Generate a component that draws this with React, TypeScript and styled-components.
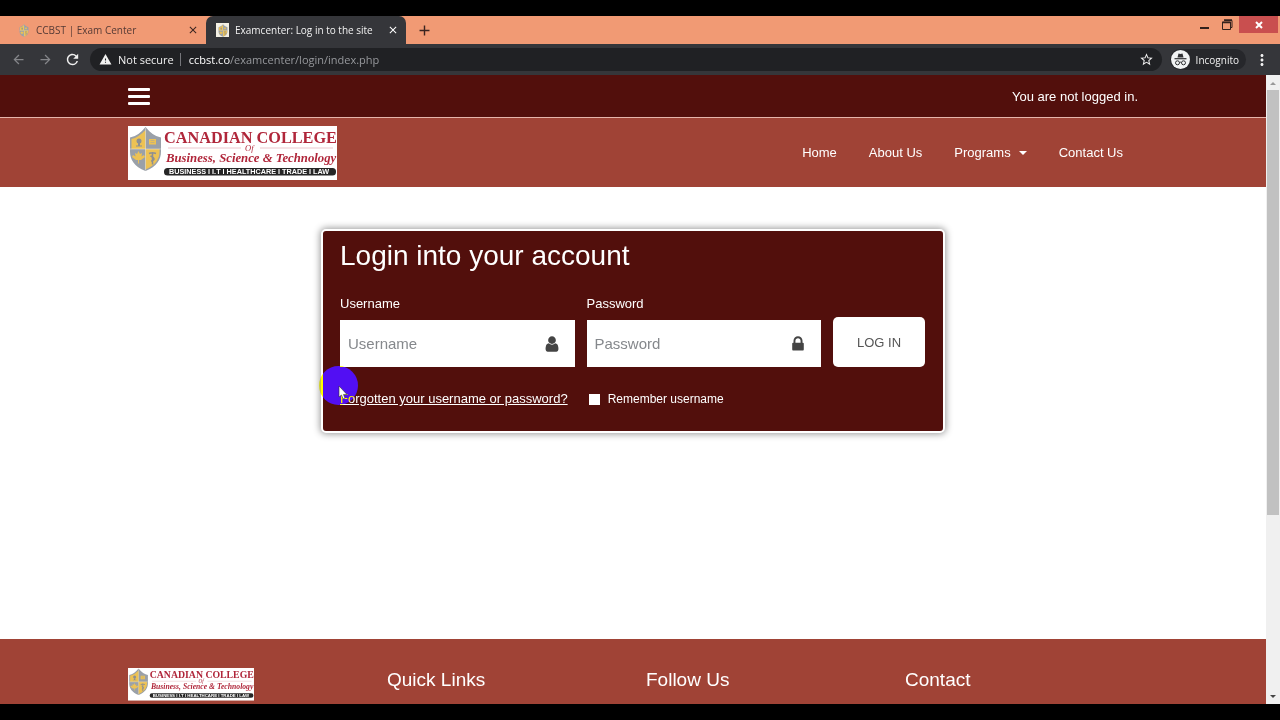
import React from "react";
import styled, { createGlobalStyle } from "styled-components";
import { MdArrowBack, MdArrowForward, MdRefresh, MdStarBorder, MdWarning, MdMoreVert, MdClose, MdAdd } from "react-icons/md";

const ui = `"Open Sans", "Noto Sans", sans-serif`;
const maroon = "#520f0c";
const brick = "#a04336";

const GlobalStyle = createGlobalStyle`
  *, *::before, *::after { box-sizing: border-box; }
  html, body { margin: 0; background: #000; }
  body { font-family: "Liberation Sans", Arial, sans-serif; font-size: 13px; color: #fff; }
  button, input { font: inherit; }
  button { border: 0; padding: 0; background: none; color: inherit; cursor: pointer; }
  h1, h2, p, ul { margin: 0; padding: 0; font-weight: 400; }
  svg { display: block; }
`;

const Screen = styled.div`
  display: flex;
  flex-direction: column;
  height: 100vh;
  padding: 16px 0;
  overflow: hidden;
`;

const TabStrip = styled.div`
  display: flex;
  flex: none;
  height: 28px;
  background: #f19a74;
  font-family: ${ui};
  font-size: 10px;
`;

const Tab = styled.div<{ $active?: boolean }>`
  display: flex;
  align-items: center;
  gap: 6px;
  width: ${(p) => (p.$active ? 200 : 206)}px;
  padding: 0 7px 0 ${(p) => (p.$active ? 10 : 17)}px;
  border-radius: 7px 7px 0 0;
  background: ${(p) => (p.$active ? "#35363a" : "transparent")};
  color: ${(p) => (p.$active ? "#f1f1f1" : "#553a35")};
`;

const TabTitle = styled.span`
  flex: 1;
  white-space: nowrap;
`;

const Favicon = styled.span<{ $boxed?: boolean }>`
  display: grid;
  place-items: center;
  width: 13px;
  height: 14px;
  background: ${(p) => (p.$boxed ? "#f4f0e4" : "transparent")};
`;

const TabButton = styled.button<{ $dark?: boolean }>`
  display: grid;
  place-items: center;
  width: 12px;
  height: 12px;
  color: ${(p) => (p.$dark ? "#3a2420" : "#fff")};
`;

const NewTab = styled.button`
  display: grid;
  place-items: center;
  width: 36px;
  color: #3a2420;
`;

const WindowControls = styled.div`
  display: flex;
  margin-left: auto;
  margin-right: 2px;
  height: 17px;
  color: #33211c;
`;

const WindowButton = styled.button<{ $close?: boolean }>`
  display: grid;
  place-items: center;
  width: ${(p) => (p.$close ? 39 : 23)}px;
  background: ${(p) => (p.$close ? "#c94f4f" : "transparent")};
  color: ${(p) => (p.$close ? "#fff" : "inherit")};
`;

const Toolbar = styled.div`
  display: flex;
  flex: none;
  align-items: center;
  height: 31px;
  padding: 0 9px 0 5px;
  background: #35363a;
  font-family: ${ui};
  font-size: 11px;
`;

const ToolButton = styled.button<{ $dim?: boolean }>`
  display: grid;
  place-items: center;
  width: 27px;
  height: 24px;
  color: ${(p) => (p.$dim ? "#85868a" : "#f1f1f1")};
`;

const AddressBar = styled.div`
  display: flex;
  flex: 1;
  align-items: center;
  height: 23px;
  margin: 0 8px 0 4px;
  padding: 0 8px 0 9px;
  border-radius: 12px;
  background: #202124;
  color: #f1f1f1;
`;

const Security = styled.span`
  display: flex;
  align-items: center;
  gap: 6px;
  padding-right: 6px;
  border-right: 1px solid #75767a;
  line-height: 12px;
  white-space: nowrap;
`;

const Url = styled.span`
  flex: 1;
  padding-left: 8px;
  color: #96989c;
  white-space: nowrap;
  b { color: #fff; font-weight: 400; }
`;

const Incognito = styled.div`
  display: flex;
  align-items: center;
  gap: 6px;
  height: 21px;
  padding: 0 7px 0 1px;
  margin-right: 7px;
  border-radius: 11px;
  background: #26272b;
  color: #f1f1f1;
  font-size: 10px;
`;

const Viewport = styled.div`
  display: flex;
  flex: 1;
  min-height: 0;
  background: #fff;
`;

const Page = styled.div`
  display: flex;
  flex: 1;
  flex-direction: column;
  min-width: 0;
`;

const Scrollbar = styled.div`
  display: flex;
  flex-direction: column;
  align-items: center;
  width: 14px;
  background: #f0f0f0;
`;

const ScrollArrow = styled.span`
  display: grid;
  place-items: center;
  flex: none;
  width: 14px;
  height: 15px;
`;

const ScrollTrack = styled.div`
  flex: 1;
  width: 12px;
`;

const ScrollThumb = styled.div`
  height: 71%;
  background: #c1c1c1;
`;

const Container = styled.div`
  display: flex;
  align-items: center;
  justify-content: space-between;
  width: 100%;
  max-width: 1036px;
  height: 100%;
  margin: 0 auto;
  padding: 0 13px;
`;

const TopBar = styled.div`
  flex: none;
  height: 43px;
  border-bottom: 1px solid #e6b5ab;
  background: ${maroon};
`;

const MenuButton = styled.button`
  display: flex;
  flex-direction: column;
  gap: 4px;
  width: 22px;
  span { height: 3px; border-radius: 1px; background: #fff; }
`;

const NavBar = styled.header`
  flex: none;
  height: 69px;
  background: ${brick};
`;

const NavLinks = styled.nav`
  display: flex;
  gap: 32px;
  padding-right: 15px;
`;

const NavLink = styled.a`
  display: flex;
  align-items: center;
  gap: 8px;
  color: #fff;
  text-decoration: none;
`;

const Caret = styled.span`
  border: 4px solid transparent;
  border-top-color: #fff;
  border-bottom: 0;
`;

const Main = styled.main`
  flex: 1;
  padding: 42px 16px 0;
`;

const Card = styled.form`
  position: relative;
  max-width: 624px;
  height: 204px;
  margin: 0 auto;
  padding: 9px 18px 0 17px;
  border: 2px solid #fff;
  border-radius: 5px;
  background: ${maroon};
  box-shadow: 0 0 7px 1px #999;
`;

const Title = styled.h1`
  font-size: 28px;
  line-height: 32px;
`;

const Fields = styled.div`
  display: flex;
  align-items: flex-end;
  gap: 12px;
  margin-top: 24px;
`;

const Field = styled.div`
  flex: 1;
  min-width: 0;
  label { display: block; line-height: 16px; margin-bottom: 8px; }
`;

const InputBox = styled.div`
  display: flex;
  align-items: center;
  height: 47px;
  padding: 0 15px 0 8px;
  background: #fff;
  color: #444;
`;

const TextInput = styled.input`
  flex: 1;
  min-width: 0;
  padding: 0;
  border: 0;
  outline: 0;
  background: none;
  font-size: 15px;
  &::placeholder { color: #85888c; opacity: 1; }
`;

const LoginButton = styled.button`
  flex: none;
  width: 92px;
  height: 50px;
  border-radius: 5px;
  background: #fff;
  color: #555;
`;

const Options = styled.div`
  display: flex;
  align-items: center;
  gap: 21px;
  margin-top: 24px;
  line-height: 16px;
  a { color: #fff; }
`;

const Remember = styled.label`
  display: flex;
  align-items: center;
  gap: 8px;
  font-size: 12px;
  input { width: 11px; height: 11px; margin: 0; appearance: none; background: #fff; }
`;

const ClickHalo = styled.span`
  position: absolute;
  left: -4px;
  top: 135px;
  width: 39px;
  height: 39px;
  border-radius: 50%;
  background: #00f;
  mix-blend-mode: difference;
  pointer-events: none;
`;

const Pointer = styled.svg`
  position: absolute;
  left: 15px;
  top: 154px;
`;

const Footer = styled.footer`
  flex: none;
  height: 65px;
  background: ${brick};
`;

const FooterGrid = styled.div`
  display: grid;
  grid-template-columns: repeat(4, 1fr);
  width: 100%;
  max-width: 1036px;
  margin: 0 auto;
  padding-top: 29px;
`;

const FooterColumn = styled.section`
  padding: 0 13px;
  h2 { font-size: 19px; line-height: 24px; }
`;

const Shield = ({ width, height }: { width: number; height: number }) => (
  <svg width={width} height={height} viewBox="0 0 66 90">
    <path d="M33 1 Q18 20 2 22 V50 C2 66 10 80 33 89 C56 80 64 66 64 50 V22 Q48 20 33 1Z" fill="#9aa0a8" />
    <path d="M33 7 V45 H5 V25 Q19 22 33 7Z" fill="#edc254" />
    <path d="M33 45 H61 V50 C61 64 54 77 33 86Z" fill="#edc254" />
    <path d="M33 3 V88 M2 45 H64" stroke="#f3efe2" strokeWidth="1" />
    <circle cx="20" cy="29" r="5" fill="#8d8f92" />
    <path d="M18 33h4v6h-4zM14 38h12v2H14z" fill="#8d8f92" />
    <path d="M40 25h14v11H40z" fill="#edc254" />
    <path d="M43 28h8M43 32h8" stroke="#9aa0a8" />
    <path d="M19 49l3 6 4-2-1 7 5-3 2 4-8 6h-4v7h-2v-7h-4l-8-6 2-4 5 3-1-7 4 2z" fill="#edc254" />
    <path d="M47 51v25M40 54q7-3 14 0M43 59q7 3 7 6t-6 4" stroke="#8d8f92" strokeWidth="3" fill="none" />
  </svg>
);

const Logo = ({ width }: { width: number }) => (
  <svg width={width} viewBox="0 0 836 216" role="img" aria-label="Canadian College of Business, Science & Technology">
    <rect width="836" height="216" fill="#fff" />
    <svg x="4" y="2" width="132" height="180" viewBox="0 0 66 90"><Shield width={66} height={90} /></svg>
    <g fontFamily="'Liberation Serif', serif" fill="#b0263a">
      <text x="144" y="66" fontSize="65" fontWeight="700">CANADIAN COLLEGE</text>
      <text x="468" y="100" fontSize="34" fontStyle="italic">Of</text>
      <text x="152" y="142" fontSize="51" fontWeight="700" fontStyle="italic">Business, Science &amp; Technology</text>
    </g>
    <path d="M160 88H452M528 88H820" stroke="#d58f98" strokeWidth="2" />
    <rect x="144" y="168" width="688" height="30" rx="14" fill="#262626" />
    <text x="164" y="193" fontFamily="'Liberation Sans', sans-serif" fontSize="29" fontWeight="700" fill="#fff">
      BUSINESS I I.T I HEALTHCARE I TRADE I LAW
    </text>
  </svg>
);

export default function App() {
  return (
    <>
      <GlobalStyle />
      <Screen>
        <TabStrip>
          <Tab>
            <Favicon><Shield width={10} height={13} /></Favicon>
            <TabTitle>CCBST | Exam Center</TabTitle>
            <TabButton $dark aria-label="Close tab"><MdClose size={12} /></TabButton>
          </Tab>
          <Tab $active>
            <Favicon $boxed><Shield width={10} height={13} /></Favicon>
            <TabTitle>Examcenter: Log in to the site</TabTitle>
            <TabButton aria-label="Close tab"><MdClose size={12} /></TabButton>
          </Tab>
          <NewTab aria-label="New tab"><MdAdd size={17} /></NewTab>
          <WindowControls>
            <WindowButton aria-label="Minimize">
              <svg width="9" height="9"><path d="M0 8h9" stroke="currentColor" strokeWidth="2" /></svg>
            </WindowButton>
            <WindowButton aria-label="Restore">
              <svg width="11" height="11" fill="none" stroke="currentColor">
                <path d="M2.500 2V1.500H10V8.500H9M.5 3h8v7.500h-8z" />
                <path d="M2 1h8M0 3.500h9" strokeWidth="1.500" />
              </svg>
            </WindowButton>
            <WindowButton $close aria-label="Close">
              <svg width="8" height="8"><path d="M1 1l6 6M7 1l-6 6" stroke="currentColor" strokeWidth="2" /></svg>
            </WindowButton>
          </WindowControls>
        </TabStrip>
        <Toolbar>
          <ToolButton $dim aria-label="Back"><MdArrowBack size={15} /></ToolButton>
          <ToolButton $dim aria-label="Forward"><MdArrowForward size={15} /></ToolButton>
          <ToolButton aria-label="Reload"><MdRefresh size={17} /></ToolButton>
          <AddressBar>
            <Security><MdWarning size={13} />Not secure</Security>
            <Url><b>ccbst.co</b>/examcenter/login/index.php</Url>
            <MdStarBorder size={15} />
          </AddressBar>
          <Incognito>
            <svg width="19" height="19" viewBox="0 0 19 19">
              <circle cx="9.500" cy="9.500" r="9.500" fill="#f1f3f4" />
              <path d="M6.500 7.500l1-4 2 .6 2-.6 1 4z" fill="#303134" />
              <path d="M3.500 8.700h12" stroke="#303134" strokeWidth="1.200" />
              <g fill="none" stroke="#303134">
                <circle cx="6.500" cy="12.800" r="2" />
                <circle cx="12.500" cy="12.800" r="2" />
                <path d="M8.500 12.500q1-.7 2 0" />
              </g>
            </svg>
            Incognito
          </Incognito>
          <MdMoreVert size={18} color="#f1f1f1" />
        </Toolbar>
        <Viewport>
          <Page>
            <TopBar>
              <Container>
                <MenuButton aria-label="Menu"><span /><span /><span /></MenuButton>
                <p>You are not logged in.</p>
              </Container>
            </TopBar>
            <NavBar>
              <Container>
                <Logo width={209} />
                <NavLinks>
                  <NavLink href="#home">Home</NavLink>
                  <NavLink href="#about">About Us</NavLink>
                  <NavLink href="#programs">Programs <Caret /></NavLink>
                  <NavLink href="#contact">Contact Us</NavLink>
                </NavLinks>
              </Container>
            </NavBar>
            <Main>
              <Card onSubmit={(e) => e.preventDefault()}>
                <Title>Login into your account</Title>
                <Fields>
                  <Field>
                    <label htmlFor="username">Username</label>
                    <InputBox>
                      <TextInput id="username" placeholder="Username" />
                      <svg width="16" height="18" viewBox="128 0 1536 1792" fill="currentColor">
                        <path d="M1536 1399q0 109-62.500 187t-150.500 78h-854q-88 0-150.500-78t-62.500-187q0-85 8.500-160.500t31.500-152 58.500-131 94-89 134.500-34.500q131 128 313 128t313-128q76 0 134.500 34.500t94 89 58.500 131 31.500 152 8.500 160.500zm-256-887q0 159-112.500 271.500t-271.500 112.500-271.500-112.500-112.500-271.500 112.500-271.500 271.500-112.500 271.500 112.500 112.500 271.500z" />
                      </svg>
                    </InputBox>
                  </Field>
                  <Field>
                    <label htmlFor="password">Password</label>
                    <InputBox>
                      <TextInput id="password" type="password" placeholder="Password" />
                      <svg width="16" height="18" viewBox="-192 0 1536 1792" fill="currentColor">
                        <path d="M320 768h512V576q0-106-75-181t-181-75-181 75-75 181v192zm832 96v576q0 40-28 68t-68 28H96q-40 0-68-28t-28-68V864q0-40 28-68t68-28h32V576q0-184 132-316t316-132 316 132 132 316v192h32q40 0 68 28t28 68z" />
                      </svg>
                    </InputBox>
                  </Field>
                  <LoginButton type="submit">LOG IN</LoginButton>
                </Fields>
                <Options>
                  <a href="#forgot">Forgotten your username or password?</a>
                  <Remember htmlFor="remember"><input id="remember" type="checkbox" />Remember username</Remember>
                </Options>
                <ClickHalo />
                <Pointer width="11" height="15" viewBox="0 0 11 15">
                  <path d="M1 1v11l2.500-2 1.500 4 2-1-1.500-3.500H9z" fill="#fff" stroke="#333" strokeWidth=".6" />
                </Pointer>
              </Card>
            </Main>
            <Footer>
              <FooterGrid>
                <FooterColumn><Logo width={126} /></FooterColumn>
                <FooterColumn><h2>Quick Links</h2></FooterColumn>
                <FooterColumn><h2>Follow Us</h2></FooterColumn>
                <FooterColumn><h2>Contact</h2></FooterColumn>
              </FooterGrid>
            </Footer>
          </Page>
          <Scrollbar aria-hidden="true">
            <ScrollArrow><svg width="6" height="4"><path d="M0 4l3-3 3 3z" fill="#999" /></svg></ScrollArrow>
            <ScrollTrack><ScrollThumb /></ScrollTrack>
            <ScrollArrow><svg width="6" height="4"><path d="M0 0h6L3 3z" fill="#444" /></svg></ScrollArrow>
          </Scrollbar>
        </Viewport>
      </Screen>
    </>
  );
}
